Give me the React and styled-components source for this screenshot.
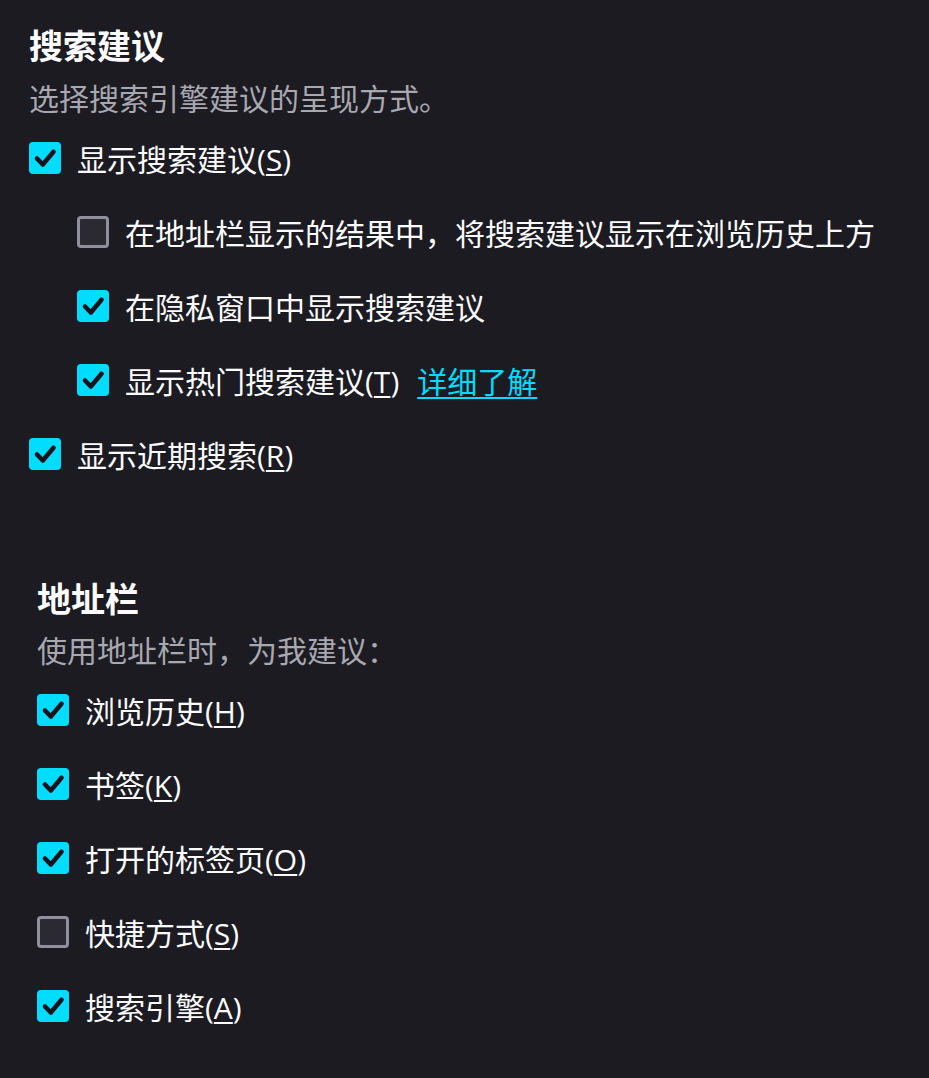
import React from "react";
import styled, { createGlobalStyle } from "styled-components";

const GlobalStyle = createGlobalStyle`
  html, body {
    margin: 0;
    padding: 0;
    background: #1c1b22;
  }
  body {
    font-family: "Open Sans", "Noto Sans CJK SC", sans-serif;
    color: #fbfbfe;
  }
`;

const Page = styled.div`
  min-height: 1078px;
  padding: 21px 0 0 29px;
  box-sizing: border-box;
`;

const Section = styled.section`
  margin-left: ${(p) => p.$shift || 0}px;
  margin-bottom: ${(p) => p.$gap || 0}px;
`;

const Title = styled.h2`
  margin: 0;
  font-size: 34px;
  font-weight: 700;
  line-height: 50px;
  color: #fbfbfe;
`;

const Desc = styled.p`
  margin: ${(p) => p.$top || 6}px 0 0;
  font-size: 30px;
  line-height: 44px;
  color: #a8a8b0;
`;

const Row = styled.label`
  display: flex;
  align-items: center;
  height: 74px;
  padding-left: ${(p) => (p.$nested ? 48 : 0)}px;
  font-size: 30px;
  color: #fbfbfe;
`;

const Box = styled.span`
  flex: none;
  width: 32px;
  height: 32px;
  box-sizing: border-box;
  border-radius: 4px;
  margin-right: 16px;
  display: flex;
  align-items: center;
  justify-content: center;
  background: ${(p) => (p.$on ? "#00ddff" : "#2b2a33")};
  border: ${(p) => (p.$on ? "none" : "3px solid #8f8f9d")};
`;

const Key = styled.u`
  text-decoration-thickness: 2px;
  text-underline-offset: 3px;
`;

const Link = styled.a`
  margin-left: 18px;
  color: #00ddff;
  text-decoration: underline;
  text-decoration-thickness: 2px;
  text-underline-offset: 4px;
`;

const Check = ({ on }) => (
  <Box $on={on}>
    {on && (
      <svg width="32" height="32" viewBox="0 0 32 32">
        <path
          d="M8 16.5 L13.8 22.5 L24.5 9.8"
          fill="none"
          stroke="#15141a"
          strokeWidth="4.6"
          strokeLinecap="round"
          strokeLinejoin="round"
        />
      </svg>
    )}
  </Box>
);

const Option = ({ on, nested, text, accessKey, children }) => (
  <Row $nested={nested}>
    <Check on={on} />
    <span>
      {text}
      {accessKey && (
        <>
          (<Key>{accessKey}</Key>)
        </>
      )}
    </span>
    {children}
  </Row>
);

export default function App() {
  return (
    <>
      <GlobalStyle />
      <Page>
        <Section $gap={83}>
          <Title>搜索建议</Title>
          <Desc>选择搜索引擎建议的呈现方式。</Desc>
          <Option on text="显示搜索建议" accessKey="S" />
          <Option nested text="在地址栏显示的结果中，将搜索建议显示在浏览历史上方" />
          <Option on nested text="在隐私窗口中显示搜索建议" />
          <Option on nested text="显示热门搜索建议" accessKey="T">
            <Link href="#">详细了解</Link>
          </Option>
          <Option on text="显示近期搜索" accessKey="R" />
        </Section>
        <Section $shift={8}>
          <Title>地址栏</Title>
          <Desc $top={5}>使用地址栏时，为我建议：</Desc>
          <Option on text="浏览历史" accessKey="H" />
          <Option on text="书签" accessKey="K" />
          <Option on text="打开的标签页" accessKey="O" />
          <Option text="快捷方式" accessKey="S" />
          <Option on text="搜索引擎" accessKey="A" />
        </Section>
      </Page>
    </>
  );
}
